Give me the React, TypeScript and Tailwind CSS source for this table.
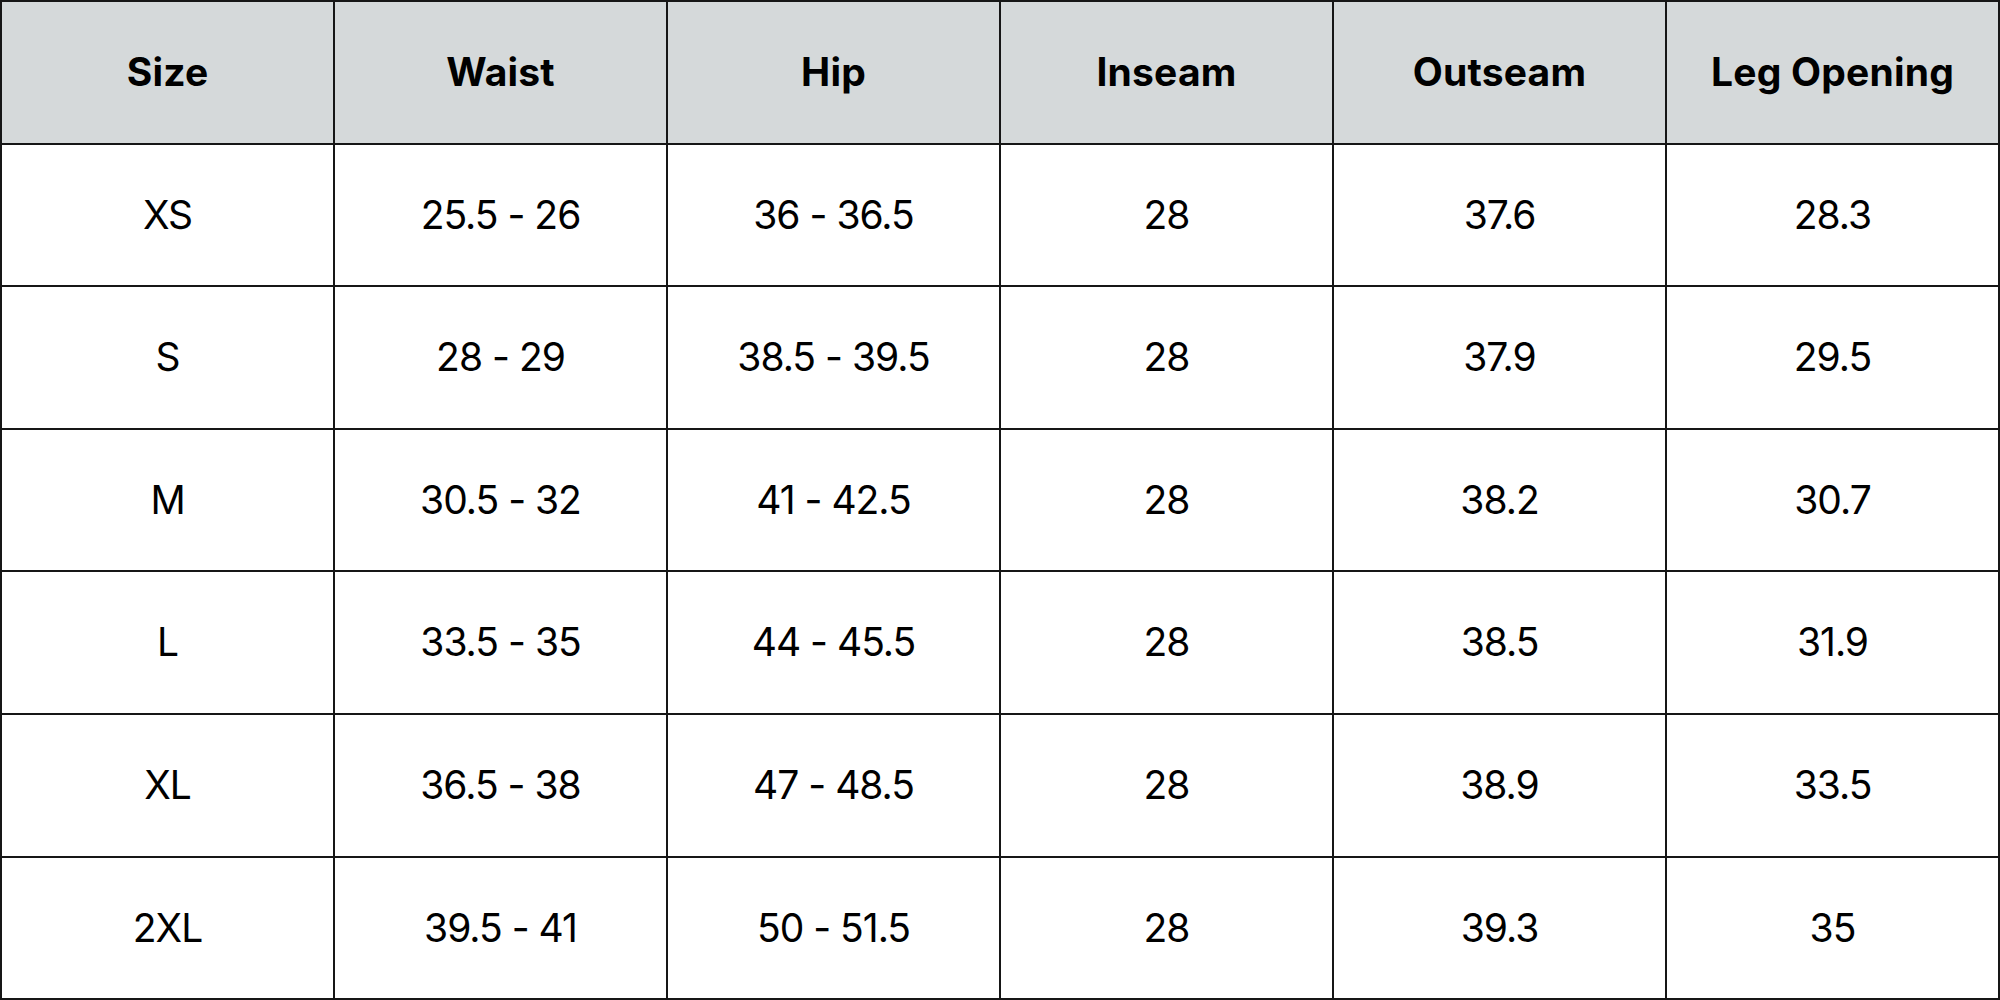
import React from "react";

const headers = ["Size", "Waist", "Hip", "Inseam", "Outseam", "Leg Opening"];
const rows = [
  ["XS", "25.5 - 26", "36 - 36.5", "28", "37.6", "28.3"],
  ["S", "28 - 29", "38.5 - 39.5", "28", "37.9", "29.5"],
  ["M", "30.5 - 32", "41 - 42.5", "28", "38.2", "30.7"],
  ["L", "33.5 - 35", "44 - 45.5", "28", "38.5", "31.9"],
  ["XL", "36.5 - 38", "47 - 48.5", "28", "38.9", "33.5"],
  ["2XL", "39.5 - 41", "50 - 51.5", "28", "39.3", "35"],
];

export default function App() {
  return (
    <div className="w-[2000px] h-[1000px] bg-white overflow-hidden" style={{ fontFamily: "Inter, 'Noto Sans', sans-serif" }}>
      <table className="w-[2000px] table-fixed border-collapse">
        <thead>
          <tr className="h-[142.6px]">
            {headers.map((h) => (
              <th
                key={h}
                className="border-2 border-[#161616] bg-[#d5d9da] text-center align-middle text-[39px] font-bold text-black tracking-[0.2px]"
              >
                {h}
              </th>
            ))}
          </tr>
        </thead>
        <tbody>
          {rows.map((r) => (
            <tr key={r[0]} className="h-[142.6px]">
              {r.map((c, i) => (
                <td
                  key={i}
                  className="border-2 border-[#161616] text-center align-middle text-[39px] font-normal text-black tracking-[-1px]"
                >
                  {c}
                </td>
              ))}
            </tr>
          ))}
        </tbody>
      </table>
    </div>
  );
}
